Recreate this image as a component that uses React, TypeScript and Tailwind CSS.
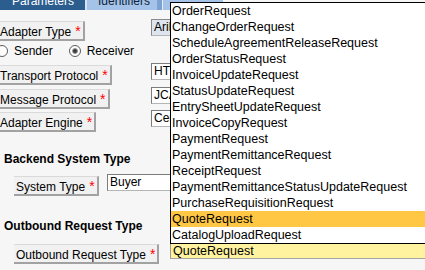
import React from 'react';

const requestTypes = [
  'OrderRequest',
  'ChangeOrderRequest',
  'ScheduleAgreementReleaseRequest',
  'OrderStatusRequest',
  'InvoiceUpdateRequest',
  'StatusUpdateRequest',
  'EntrySheetUpdateRequest',
  'InvoiceCopyRequest',
  'PaymentRequest',
  'PaymentRemittanceRequest',
  'ReceiptRequest',
  'PaymentRemittanceStatusUpdateRequest',
  'PurchaseRequisitionRequest',
  'QuoteRequest',
  'CatalogUploadRequest',
];

const FieldLabel = ({ text }: { text: string }) => (
  <div className="flex h-[20px] shrink-0 items-start whitespace-nowrap border-t border-r-2 border-b-2 border-t-[#dadada] border-r-[#a2a2a2] border-b-[#a2a2a2] bg-[#f1f1f1] pl-[2px] pr-[2px] text-[12px] leading-[14px] text-black">
    <span className="pt-[3px]">{text}</span>
    <span className="ml-[4px] pt-[2px] text-[14px] leading-[14px] text-[#ff0000]">*</span>
  </div>
);

const Field = ({ value, tinted }: { value: string; tinted?: boolean }) => (
  <div
    className={
      tinted
        ? 'h-[17px] w-[120px] overflow-hidden whitespace-nowrap border border-t-[#8a8a8a] border-l-[#8a8a8a] border-r-[#b5b5b5] border-b-[#b5b5b5] bg-[#dfe5ee] pl-[2px] text-[12px] leading-[15px] text-black'
        : 'h-[17px] w-[120px] overflow-hidden whitespace-nowrap border border-t-[#7c7c7c] border-l-[#7c7c7c] border-r-[#b5b5b5] border-b-[#b5b5b5] bg-white pl-[2px] text-[12px] leading-[15px] text-black'
    }
  >
    {value}
  </div>
);

const Radio = ({ checked }: { checked?: boolean }) => (
  <span className="flex h-[12px] w-[12px] shrink-0 items-center justify-center rounded-full border border-[#5c5c5c] bg-white">
    {checked && <span className="h-[6px] w-[6px] rounded-full border border-[#9a9a9a] bg-[#3b3b3b]" />}
  </span>
);

export default function App() {
  return (
    <div className="relative h-[270px] w-[425px] overflow-hidden bg-[#f6f6f6] font-['Liberation_Sans',Arial,sans-serif] text-black">
      {/* tab strip, scrolled so only the lower half shows */}
      <div className="flex h-[10px] overflow-hidden text-[12px] leading-[14px]">
        <div className="w-[85px] bg-[#2b5d8f] pl-[12px] text-white">
          <span className="-mt-[6px] block">Parameters</span>
        </div>
        <div className="w-[2px] bg-[#d6e2f0]" />
        <div className="w-[70px] bg-[#a5c3e8] pl-[11px] text-[#10233d]">
          <span className="-mt-[6px] block">Identifiers</span>
        </div>
        <div className="w-[5px] bg-[#7ca2d1]" />
        <div className="w-[1px] bg-[#e8eef7]" />
        <div className="w-[60px] bg-[#a5c3e8]" />
      </div>

      <div className="-ml-[2px]">
        <div className="mt-[9px] flex h-[20px] items-start">
          <div className="w-[153px] shrink-0">
            <div className="inline-block">
              <FieldLabel text="Adapter Type" />
            </div>
          </div>
          <Field value="Ariba" tinted />
        </div>

        <div className="-ml-[2px] flex h-[24px] items-center text-[12px] leading-[14px]">
          <Radio />
          <span className="ml-[6px]">Sender</span>
          <span className="ml-[16px]">
            <Radio checked />
          </span>
          <span className="ml-[6px]">Receiver</span>
        </div>

        <div className="flex h-[20px] items-start">
          <div className="w-[153px] shrink-0">
            <div className="inline-block">
              <FieldLabel text="Transport Protocol" />
            </div>
          </div>
          <Field value="HTTP" />
        </div>

        <div className="mt-[4px] flex h-[20px] items-start">
          <div className="w-[153px] shrink-0">
            <div className="inline-block">
              <FieldLabel text="Message Protocol" />
            </div>
          </div>
          <Field value="JCA" />
        </div>

        <div className="mt-[3px] flex h-[20px] items-start">
          <div className="w-[153px] shrink-0">
            <div className="inline-block">
              <FieldLabel text="Adapter Engine" />
            </div>
          </div>
          <Field value="Central" />
        </div>
      </div>

      <div className="mt-[22px] h-[14px] pl-[4px] text-[12px] font-bold leading-[14px]">Backend System Type</div>
      <div className="mt-[8px] flex h-[20px] items-start pl-[14px]">
        <div className="w-[93px] shrink-0">
          <div className="inline-block">
            <FieldLabel text="System Type" />
          </div>
        </div>
        <Field value="Buyer" />
      </div>

      <div className="mt-[25px] h-[14px] pl-[4px] text-[12px] font-bold leading-[14px]">Outbound Request Type</div>
      <div className="mt-[9px] flex h-[20px] items-start pl-[14px]">
        <div className="w-[156px] shrink-0">
          <div className="inline-block">
            <FieldLabel text="Outbound Request Type" />
          </div>
        </div>
        <div className="mt-[2px] h-[15px] w-[270px] overflow-hidden whitespace-nowrap border-l border-b border-l-[#9a9a9a] border-b-[#a4a4a4] bg-[#fff3a0] pl-[2px] text-[12.5px] leading-[14px]">
          QuoteRequest
        </div>
      </div>

      {/* open list of the Outbound Request Type combo box */}
      <div className="absolute left-[170px] top-[2px] w-[280px] border border-black bg-white">
        {requestTypes.map((t, i) => (
          <div
            key={t}
            className={
              i === 13
                ? 'h-[16px] whitespace-nowrap bg-[#ffc744] pl-[1px] text-[12.5px] leading-[16px]'
                : 'h-[16px] whitespace-nowrap pl-[1px] text-[12.5px] leading-[16px]'
            }
          >
            {t}
          </div>
        ))}
      </div>
    </div>
  );
}
